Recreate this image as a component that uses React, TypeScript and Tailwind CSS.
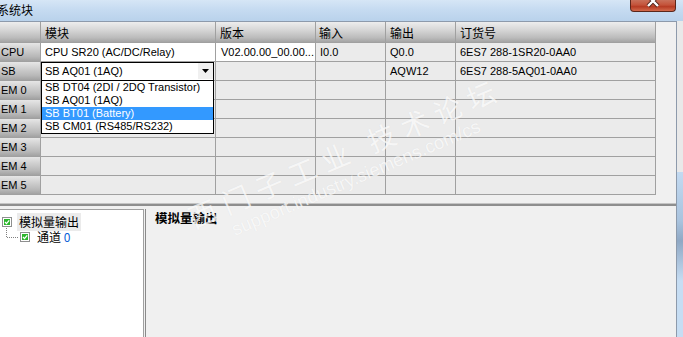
import React from 'react';

const HDR = "bg-[linear-gradient(to_bottom,#ededed_0%,#d6d6d6_40%,#bcbcbc_78%,#a4a4a4_100%)]";
const RH = "bg-[linear-gradient(to_bottom,#e6e6e6_0%,#d0d0d0_35%,#b8b8b8_75%,#a2a2a2_100%)]";
const CELL = "h-[19px] border-r border-b border-[#a0a0a0] flex items-center overflow-hidden whitespace-nowrap";

function Check() {
  return (
    <svg width="10" height="10" viewBox="0 0 10 10" className="block shrink-0">
      <rect x="0.5" y="0.5" width="9" height="9" fill="#ffffff" stroke="#8e8f8f" />
      <rect x="2" y="2" width="6" height="6" fill="#2bb52b" />
      <path d="M3 5 L4.5 6.6 L7.2 3.3" stroke="#ffffff" strokeWidth="1.3" fill="none" />
    </svg>
  );
}

type Row = {
  h: string;
  module?: string;
  ver?: string;
  inp?: string;
  out?: string;
  order?: string;
  white?: boolean;
  combo?: boolean;
};

const rows: Row[] = [
  { h: 'CPU', module: 'CPU SR20 (AC/DC/Relay)', ver: 'V02.00.00_00.00...', inp: 'I0.0', out: 'Q0.0', order: '6ES7 288-1SR20-0AA0', white: true },
  { h: 'SB', combo: true, out: 'AQW12', order: '6ES7 288-5AQ01-0AA0' },
  { h: 'EM 0' },
  { h: 'EM 1' },
  { h: 'EM 2' },
  { h: 'EM 3' },
  { h: 'EM 4' },
  { h: 'EM 5' },
];

const options = ['SB DT04 (2DI / 2DQ Transistor)', 'SB AQ01 (1AQ)', 'SB BT01 (Battery)', 'SB CM01 (RS485/RS232)'];

function Combo() {
  return (
    <div className="absolute left-0 top-0 w-[173px] h-[19px] bg-white border border-black flex items-center pl-[3px] z-10">
      <span>SB AQ01 (1AQ)</span>
      <div className="absolute right-0 top-0 w-[15px] h-[16px] bg-[#f0f0f0] flex items-center justify-center">
        <svg width="7" height="4" viewBox="0 0 7 4" className="block">
          <path d="M0 0 H7 L3.5 4 Z" fill="#000000" />
        </svg>
      </div>
      <div className="absolute left-[-1px] top-[17px] w-[173px] h-[54px] border border-black bg-white flex flex-col">
        {options.map((o, i) => (
          <div
            key={o}
            className={
              i === 2
                ? 'h-[13px] flex items-center pl-[3px] bg-[#3399ff] text-white whitespace-nowrap'
                : 'h-[13px] flex items-center pl-[3px] text-black whitespace-nowrap'
            }
          >
            {o}
          </div>
        ))}
      </div>
    </div>
  );
}

export default function App() {
  return (
    <div className="relative w-[683px] h-[337px] overflow-hidden bg-[#f0f0f0] text-black text-[11px] leading-[13px] [font-family:'Liberation_Sans','Noto_Sans_CJK_SC',sans-serif] flex flex-col">
      {/* Title bar */}
      <div className="h-[21px] shrink-0 flex items-start bg-[linear-gradient(to_bottom,#d6e6f6_0%,#c6dbf1_45%,#b9d2eb_100%)]">
        <span className="ml-[-3px] mt-[3px] text-[12px] leading-[14px] [font-family:'Noto_Sans_CJK_SC',sans-serif]">系统块</span>
        <div className="ml-auto mr-[7px] w-[46px] h-[12px] rounded-b-[4px] border border-t-0 border-[#5b261a] bg-[linear-gradient(to_bottom,#c9705a_0%,#c4533a_45%,#b73c24_60%,#d26a4c_100%)] overflow-hidden">
          <svg width="44" height="11" viewBox="0 0 44 11" className="block">
            <path d="M17 -4 L27 6 M27 -4 L17 6" stroke="#4a1e14" strokeWidth="4" fill="none" />
            <path d="M17 -4 L27 6 M27 -4 L17 6" stroke="#ffffff" strokeWidth="2.4" fill="none" />
          </svg>
        </div>
      </div>

      <div className="flex flex-1 min-h-0">
        <div className="w-[677px] flex flex-col border-t border-r border-[#8d9aab]">
          {/* Table */}
          <div className="flex shrink-0">
            <div className="grid grid-cols-[41px_175px_100px_70px_70px_200px]">
              <div className={`${CELL} h-[21px] ${HDR}`}></div>
              <div className={`${CELL} h-[21px] ${HDR} pl-[4px] text-[12px] [font-family:'Noto_Sans_CJK_SC',sans-serif]`}>模块</div>
              <div className={`${CELL} h-[21px] ${HDR} pl-[4px] text-[12px] [font-family:'Noto_Sans_CJK_SC',sans-serif]`}>版本</div>
              <div className={`${CELL} h-[21px] ${HDR} pl-[3px] text-[12px] [font-family:'Noto_Sans_CJK_SC',sans-serif]`}>输入</div>
              <div className={`${CELL} h-[21px] ${HDR} pl-[4px] text-[12px] [font-family:'Noto_Sans_CJK_SC',sans-serif]`}>输出</div>
              <div className={`${CELL} h-[21px] ${HDR} pl-[4px] text-[12px] [font-family:'Noto_Sans_CJK_SC',sans-serif]`}>订货号</div>
              {rows.map((r) => (
                <React.Fragment key={r.h}>
                  <div className={`${CELL} ${RH} pl-[1px]`}>{r.h}</div>
                  {r.combo ? (
                    <div className="relative h-[19px] border-r border-b border-[#a0a0a0] bg-[#ebebeb]">
                      <Combo />
                    </div>
                  ) : (
                    <div className={`${CELL} pl-[4px] ${r.white ? 'bg-white' : 'bg-[#ebebeb]'}`}>{r.module}</div>
                  )}
                  <div className={`${CELL} pl-[5px] ${r.white ? 'bg-white' : 'bg-[#ebebeb]'}`}>{r.ver}</div>
                  <div className={`${CELL} pl-[4px] bg-[#ebebeb]`}>{r.inp}</div>
                  <div className={`${CELL} pl-[4px] bg-[#ebebeb]`}>{r.out}</div>
                  <div className={`${CELL} pl-[4px] bg-[#ebebeb]`}>{r.order}</div>
                </React.Fragment>
              ))}
            </div>
            <div className="flex-1"></div>
          </div>

          {/* Gap + splitter */}
          <div className="h-[8px] shrink-0"></div>
          <div className="h-[1px] shrink-0 bg-[#c4c4c4]"></div>
          <div className="h-[2px] shrink-0 bg-[#8e8e8e]"></div>
          <div className="h-[3px] shrink-0"></div>

          {/* Bottom panels */}
          <div className="flex flex-1 min-h-0">
            <div className="w-[144px] shrink-0 bg-white border-t border-r border-[#a0a0a0] pt-[3px] text-[12px] [font-family:'Noto_Sans_CJK_SC',sans-serif]">
              <div className="h-[18px] flex items-center pl-[2px]">
                <Check />
                <span className="ml-[5px] h-full px-[2px] flex items-center bg-[#ebebeb] leading-[14px]">模拟量输出</span>
              </div>
              <div className="relative h-[12px] flex items-center pl-[20px]">
                <svg width="12" height="11" viewBox="0 0 12 11" className="absolute left-[6px] top-[-3px] block">
                  <path d="M0.5 0 V10 M1 9.5 H12" stroke="#808080" strokeWidth="1" strokeDasharray="1 1" fill="none" />
                </svg>
                <Check />
                <span className="ml-[7px] leading-[14px] whitespace-nowrap">通道 <span className="text-[#0a5fd8]">0</span></span>
              </div>
            </div>
            <div className="w-[1px] shrink-0"></div>
            <div className="flex-1 border-l border-[#8a8a8a] pt-[1px] pl-[9px]">
              <span className="font-bold text-[12.5px] leading-[16px] [font-family:'Noto_Sans_CJK_SC',sans-serif]">模拟量输出</span>
            </div>
          </div>
        </div>
        <div className="w-[6px] bg-[linear-gradient(to_bottom,#e9e9e9_0px,#e9e9e9_151px,#c3daf1_151px,#a9c3de_200px,#8fa8c4_220px,#c6ddf3_260px)]"></div>
      </div>

      {/* Watermark */}
      <div className="absolute inset-0 pointer-events-none overflow-hidden">
        <div className="absolute left-[345px] top-[152px] -translate-x-1/2 -translate-y-1/2 rotate-[-23deg] whitespace-nowrap text-[28px] leading-[32px] tracking-[8px] text-white/75 [text-shadow:0_0_1px_rgba(0,0,0,0.07)] [font-family:'Noto_Sans_CJK_SC',sans-serif]">
          西门子工业 技术论坛
        </div>
        <div className="absolute left-[356px] top-[178px] -translate-x-1/2 -translate-y-1/2 rotate-[-23deg] whitespace-nowrap text-[18.5px] leading-[22px] text-white/75 [text-shadow:0_0_1px_rgba(0,0,0,0.07)] [font-family:'Liberation_Sans',sans-serif]">
          support.industry.siemens.com/cs
        </div>
      </div>
    </div>
  );
}
